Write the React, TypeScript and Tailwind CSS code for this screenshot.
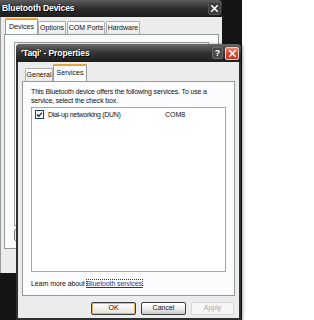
import React from 'react';

function CloseGlyph({ className }: { className?: string }) {
  return (
    <svg viewBox="0 0 10 10" className={className}>
      <path d="M2 2 L8 8 M8 2 L2 8" stroke="white" strokeWidth="1.8" strokeLinecap="square" />
    </svg>
  );
}

function Tab({ label, active, className = '' }: { label: string; active?: boolean; className?: string }) {
  if (active) {
    return (
      <div className={`relative z-10 flex items-center justify-center border border-b-0 border-[#919b9c] bg-[#fcfcfe] rounded-t-[2px] ${className}`}>
        <div className="absolute left-[-1px] right-[-1px] top-[-1px] h-[2px] bg-[#e8a33a] rounded-t-[2px]" />
        <span className="mt-[1px]">{label}</span>
      </div>
    );
  }
  return (
    <div className={`flex items-center justify-center border border-b-0 border-[#a9b0b2] bg-gradient-to-b from-white to-[#eceae6] rounded-t-[2px] ${className}`}>
      {label}
    </div>
  );
}

function BackWindow() {
  return (
    <div className="absolute left-0 top-0 w-[222px] h-[273px] flex flex-col">
      <div className="h-[17px] flex items-center justify-between bg-gradient-to-b from-[#5c5c5c] via-[#2e2e2e] to-[#1c1c1c] rounded-tr-[4px] pl-[2px] pr-[1px]">
        <span className="text-white font-bold text-[8.5px] tracking-[-0.1px] [text-shadow:1px_1px_0_#000]">Bluetooth Devices</span>
        <div className="w-[13px] h-[13px] rounded-[2px] bg-[#3b3b3b] border border-[#555] flex items-center justify-center">
          <CloseGlyph className="w-[9px] h-[9px]" />
        </div>
      </div>
      <div className="flex-1 bg-[#ececec] flex flex-col px-[3px] pb-[24px] border-l border-[#9a9a9a]">
        <div className="flex items-end h-[17px] text-[7px] text-[#111] pl-[1px]">
          <Tab label="Devices" active className="w-[33px] h-[16px]" />
          <Tab label="Options" className="w-[28px] h-[13px]" />
          <Tab label="COM Ports" className="w-[38px] h-[13px] ml-[1px]" />
          <Tab label="Hardware" className="w-[34px] h-[13px] ml-[1px]" />
        </div>
        <div className="flex-1 border border-[#919b9c] bg-[#fbfbfb] px-[9px] pt-[7px] flex flex-col">
          <div className="h-[184px] border border-[#9c9c9c] bg-white" />
          <div className="mt-[3px] w-[30px] h-[12px] border border-[#777] rounded-[2px] bg-[#f1f1f1]" />
        </div>
      </div>
    </div>
  );
}

function Button({ label, variant }: { label: string; variant: 'default' | 'normal' | 'disabled' }) {
  const base = 'h-[13px] flex items-center justify-center text-[7px] rounded-[2px]';
  if (variant === 'default') {
    return (
      <div className={`${base} w-[45px] border border-[#3b3b3b] bg-gradient-to-b from-white to-[#e4e1d8] shadow-[inset_0_0_0_1px_#e3b770]`}>
        {label}
      </div>
    );
  }
  if (variant === 'disabled') {
    return (
      <div className={`${base} w-[43px] border border-[#d6d6d6] bg-[#f6f6f6] text-[#a8a8a8]`}>
        {label}
      </div>
    );
  }
  return (
    <div className={`${base} w-[45px] border border-[#3b3b3b] bg-gradient-to-b from-white via-[#f0f0f0] to-[#c9c9c9]`}>
      {label}
    </div>
  );
}

function FrontWindow() {
  return (
    <div className="absolute left-[16px] top-[44px] w-[225px] h-[276px] flex flex-col border-x-2 border-b-2 border-[#2f2f2f] rounded-t-[4px] shadow-[2px_0_3px_rgba(0,0,0,0.35)]">
      <div className="h-[18px] -mx-[2px] flex items-center justify-between bg-gradient-to-b from-[#6a6a6a] via-[#333] to-[#1e1e1e] rounded-t-[4px] pl-[5px] pr-[2px]">
        <span className="text-white font-bold text-[8.5px] tracking-[-0.1px] [text-shadow:1px_1px_0_#000]">'Taqi' - Properties</span>
        <div className="flex items-center gap-[2px]">
          <div className="w-[11px] h-[12px] rounded-[2px] bg-[#4a4a4a] border border-[#6a6a6a] flex items-center justify-center text-white font-bold text-[9px] leading-none">
            ?
          </div>
          <div className="w-[14px] h-[13px] rounded-[2px] bg-gradient-to-b from-[#f08a6c] via-[#d9462a] to-[#c8361c] border border-[#f2d0c6] flex items-center justify-center">
            <CloseGlyph className="w-[9px] h-[9px]" />
          </div>
        </div>
      </div>
      <div className="flex-1 bg-[#ececec] flex flex-col px-[4px] pt-[2px] text-[#111]">
        <div className="flex items-end h-[17px] text-[7px] pl-[3px]">
          <Tab label="General" className="w-[28px] h-[13px]" />
          <Tab label="Services" active className="w-[34px] h-[17px]" />
        </div>
        <div className="h-[215px] border border-[#919b9c] bg-[#fcfcfe] px-[8px] pt-[5px] flex flex-col text-[7px] leading-[9px]">
          <p className="tracking-[-0.15px]">
            This Bluetooth device offers the following services. To use a
            <br />
            service, select the check box.
          </p>
          <div className="mt-[2px] h-[165px] border border-[#a5a5a5] bg-white px-[3px] pt-[2px]">
            <div className="flex items-center h-[9px]">
              <div className="w-[9px] h-[9px] border border-[#1c3f6e] bg-white flex items-center justify-center">
                <svg viewBox="0 0 8 8" className="w-[7px] h-[7px]">
                  <path d="M1.2 4 L3.2 6 L6.8 1.8" stroke="#222" strokeWidth="1.4" fill="none" />
                </svg>
              </div>
              <span className="ml-[4px] w-[117px] tracking-[-0.3px]">Dial-up networking (DUN)</span>
              <span>COM8</span>
            </div>
          </div>
          <div className="mt-[7px] tracking-[-0.1px]">
            Learn more about{' '}
            <span className="text-[#1b3c8f] underline outline-1 outline-dotted outline-[#333]">Bluetooth services</span>.
          </div>
        </div>
        <div className="flex justify-end gap-[5px] pr-[1px] mt-[6px]">
          <Button label="OK" variant="default" />
          <Button label="Cancel" variant="normal" />
          <Button label="Apply" variant="disabled" />
        </div>
      </div>
    </div>
  );
}

export default function App() {
  return (
    <div className="relative w-[314px] h-[320px] bg-white overflow-hidden font-['Liberation_Sans',Arial,sans-serif]">
      <div className="absolute left-0 top-0 w-[242px] h-[320px] bg-[#151515]" />
      <BackWindow />
      <FrontWindow />
    </div>
  );
}
